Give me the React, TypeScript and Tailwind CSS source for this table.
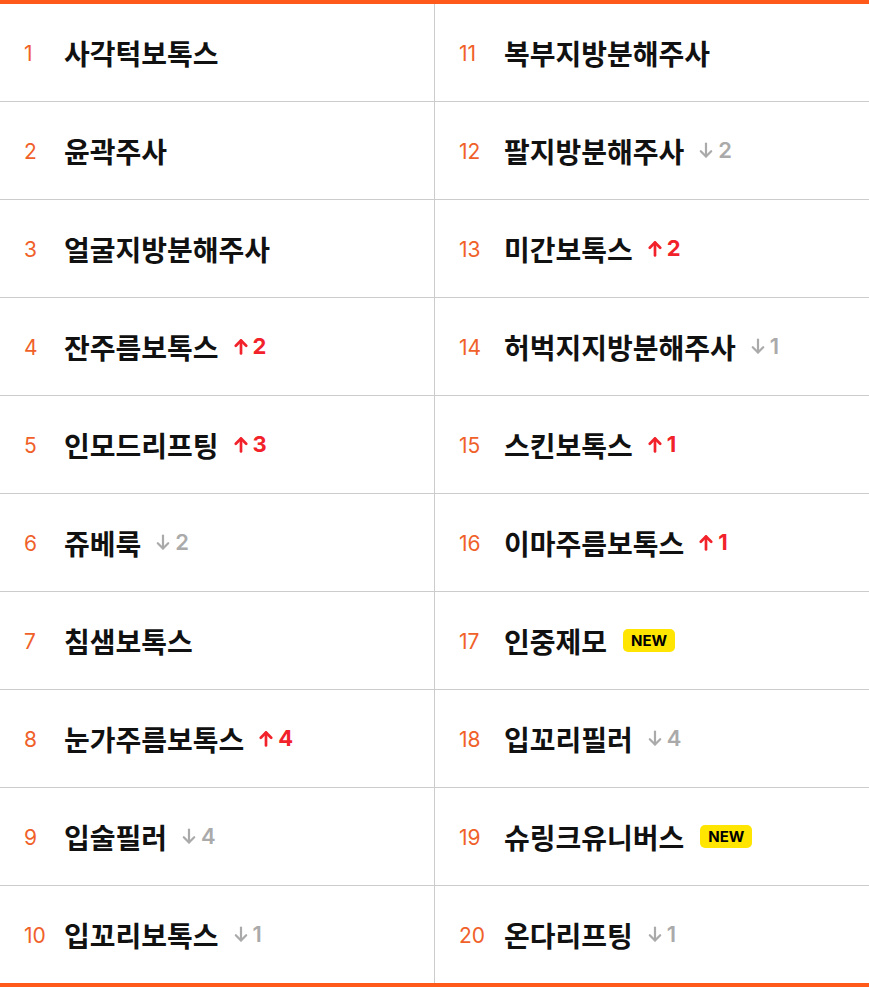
import React from 'react';

type Item = { rank: number; name: string; change?: 'up' | 'down' | 'new'; amount?: number };

const left: Item[] = [
  { rank: 1, name: '사각턱보톡스' },
  { rank: 2, name: '윤곽주사' },
  { rank: 3, name: '얼굴지방분해주사' },
  { rank: 4, name: '잔주름보톡스', change: 'up', amount: 2 },
  { rank: 5, name: '인모드리프팅', change: 'up', amount: 3 },
  { rank: 6, name: '쥬베룩', change: 'down', amount: 2 },
  { rank: 7, name: '침샘보톡스' },
  { rank: 8, name: '눈가주름보톡스', change: 'up', amount: 4 },
  { rank: 9, name: '입술필러', change: 'down', amount: 4 },
  { rank: 10, name: '입꼬리보톡스', change: 'down', amount: 1 },
];

const right: Item[] = [
  { rank: 11, name: '복부지방분해주사' },
  { rank: 12, name: '팔지방분해주사', change: 'down', amount: 2 },
  { rank: 13, name: '미간보톡스', change: 'up', amount: 2 },
  { rank: 14, name: '허벅지지방분해주사', change: 'down', amount: 1 },
  { rank: 15, name: '스킨보톡스', change: 'up', amount: 1 },
  { rank: 16, name: '이마주름보톡스', change: 'up', amount: 1 },
  { rank: 17, name: '인중제모', change: 'new' },
  { rank: 18, name: '입꼬리필러', change: 'down', amount: 4 },
  { rank: 19, name: '슈링크유니버스', change: 'new' },
  { rank: 20, name: '온다리프팅', change: 'down', amount: 1 },
];

const latin = { fontFamily: 'Inter, "Noto Sans", sans-serif' };

const Arrow = ({ down }: { down?: boolean }) => (
  <svg
    width="14"
    height="17"
    viewBox="0 0 14 17"
    fill="none"
    stroke="currentColor"
    strokeWidth={down ? 2.2 : 2.7}
    strokeLinecap="round"
    strokeLinejoin="round"
    className={down ? 'rotate-180' : ''}
  >
    <path d="M7 15.5V2.5" />
    <path d="M1.8 7.8L7 2.5L12.2 7.8" />
  </svg>
);

const Change = ({ item }: { item: Item }) => {
  if (item.change === 'new') {
    return (
      <span
        className="ml-[16px] rounded-[5px] bg-[#ffe500] px-[8px] py-[3px] text-[15px] font-bold leading-[17px] text-black"
        style={latin}
      >
        NEW
      </span>
    );
  }
  if (item.change === 'up') {
    return (
      <span className="ml-[15px] flex items-center gap-[5px] text-[22px] font-bold text-[#f2222b]" style={latin}>
        <Arrow />
        {item.amount}
      </span>
    );
  }
  if (item.change === 'down') {
    return (
      <span className="ml-[15px] flex items-center gap-[5px] text-[22px] font-semibold text-[#aaaaaa]" style={latin}>
        <Arrow down />
        {item.amount}
      </span>
    );
  }
  return null;
};

const Column = ({ items, rankWidth }: { items: Item[]; rankWidth: string }) => (
  <div className="flex flex-col">
    {items.map((item, i) => (
      <div
        key={item.rank}
        className={`flex h-[97px] items-center pl-[24px] ${i < items.length - 1 ? 'box-content border-b border-[#cccccc]' : ''}`}
      >
        <span className={`${rankWidth} shrink-0 pt-[2px] text-[21px] font-normal text-[#f0612a]`} style={latin}>
          {item.rank}
        </span>
        <span className="text-[28px] font-bold leading-none text-[#111111]">{item.name}</span>
        <Change item={item} />
      </div>
    ))}
  </div>
);

export default function App() {
  return (
    <div
      className="w-[869px] border-y-4 border-[#ff5a1a] bg-white"
      style={{ fontFamily: '"Noto Sans CJK KR", "Noto Sans", sans-serif' }}
    >
      <div className="grid grid-cols-[434px_1px_434px]">
        <Column items={left} rankWidth="w-[40px]" />
        <div className="bg-[#cccccc]" />
        <Column items={right} rankWidth="w-[45px]" />
      </div>
    </div>
  );
}
